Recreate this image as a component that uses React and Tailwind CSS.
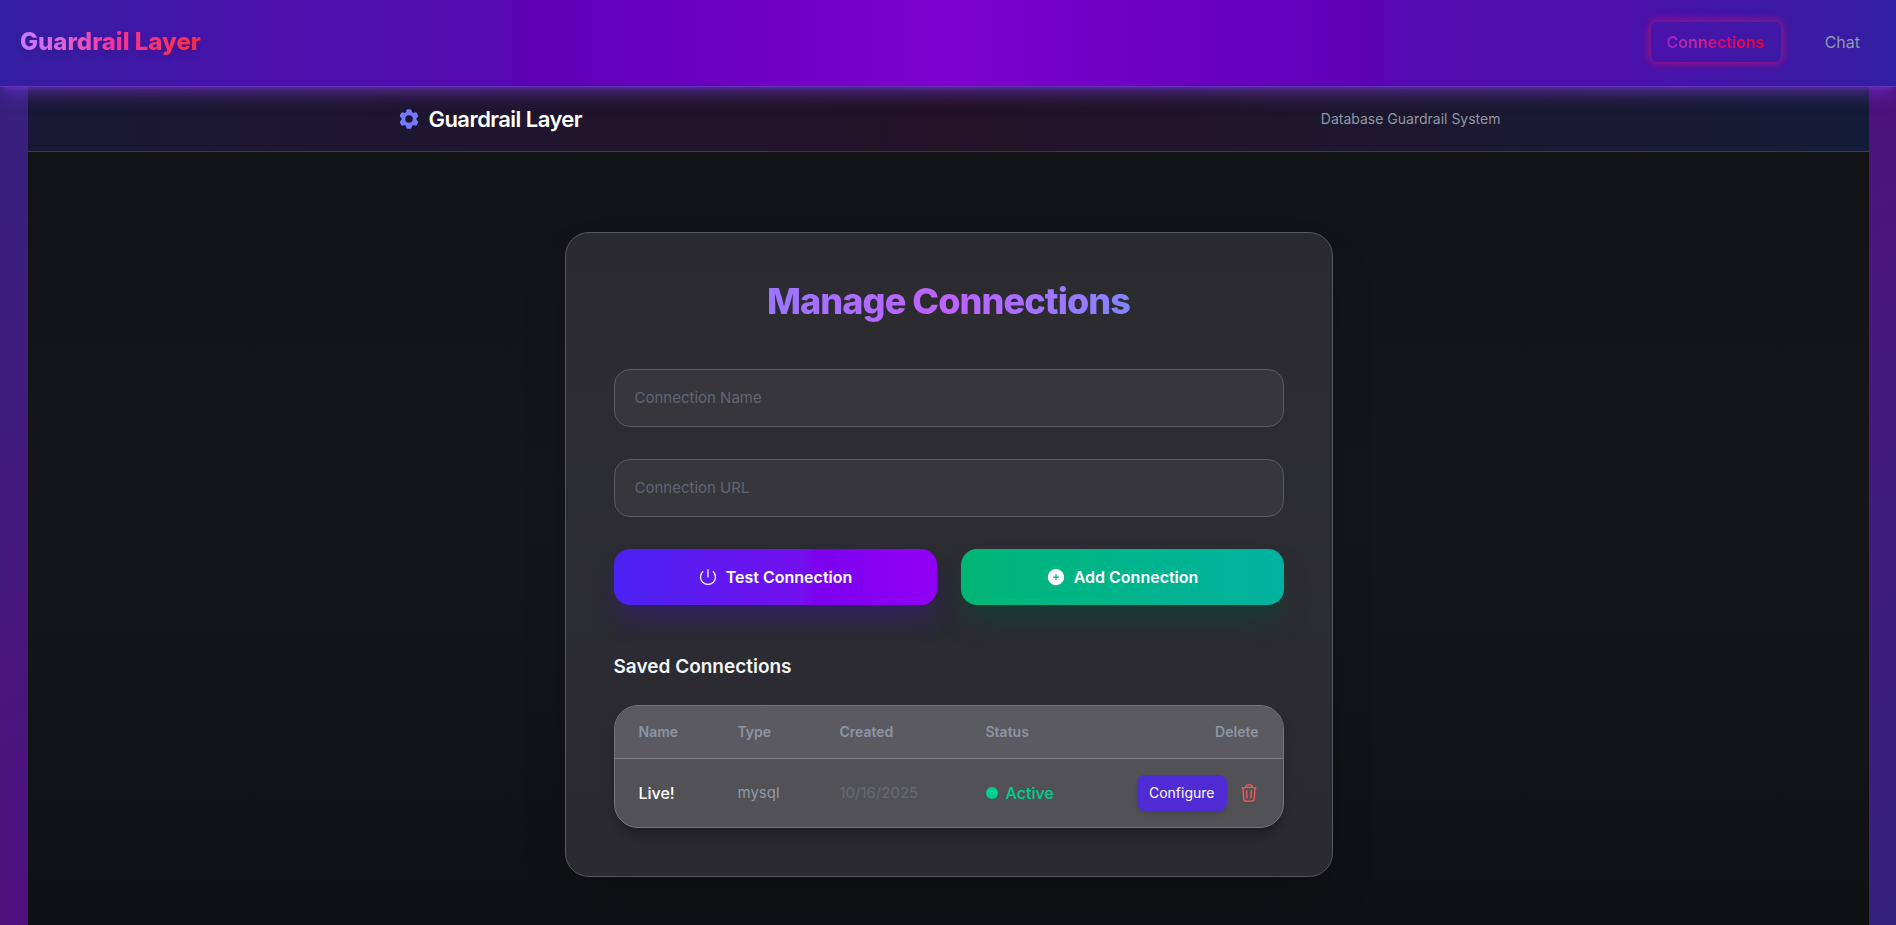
import { HiCog6Tooth, HiOutlinePower, HiOutlineTrash, HiPlusCircle } from "react-icons/hi2";

const connections = [{ name: "Live!", type: "mysql", created: "10/16/2025", status: "Active" }];

function TextField({ label, type = "text" }) {
  return (
    <input
      type={type}
      aria-label={label}
      placeholder={label}
      className="w-full rounded-2xl border border-[#5b5c61] bg-[#36363b] px-5 py-4 text-[15px] leading-6 text-white placeholder:text-[#616673] focus:outline-none"
    />
  );
}

function NavBar() {
  return (
    <nav className="relative z-10 flex items-center justify-between border-b border-[#6434b8] bg-[linear-gradient(90deg,#331fa1_0%,#4b11ac_14%,#550bb2_26%,#5d00b6_28%,#7d00ce_50%,#5d00b6_72%,#550bb2_74%,#4b11ac_86%,#331fa1_100%)] px-5 pt-[22px] pb-6 shadow-lg shadow-[#7c3ae0]/50">
      <span className="bg-linear-to-r from-purple-400 via-pink-500 to-red-500 bg-clip-text text-2xl font-extrabold text-transparent drop-shadow-md">
        Guardrail Layer
      </span>
      <div className="flex items-center gap-7">
        <a href="#connections" className="rounded-md px-4 py-2 font-semibold shadow-[0_0_9px_1px_#d0106ecc]">
          <span className="bg-linear-to-r from-[#a01cc8] via-[#e6006e] to-[#f00028] bg-clip-text text-transparent">
            Connections
          </span>
        </a>
        <a href="#chat" className="px-4 py-2 text-[#9197ae]">Chat</a>
      </div>
    </nav>
  );
}

function ConnectionsTable() {
  return (
    <div className="overflow-hidden rounded-3xl border border-[#76767b] bg-[#525256] shadow-lg shadow-black/25">
      <table className="w-full text-left">
        <thead className="border-b border-[#7d7d82] bg-[#5b5a60] text-sm text-[#8d95a5]">
          <tr>
            <th className="w-[99px] py-4 pl-6 font-semibold">Name</th>
            <th className="w-[102px] py-4 pl-6 font-semibold">Type</th>
            <th className="w-[146px] py-4 pl-6 font-semibold">Created</th>
            <th className="py-4 pl-6 font-semibold">Status</th>
            <th className="px-6 py-4 text-right font-semibold">Delete</th>
          </tr>
        </thead>
        <tbody>
          {connections.map((c) => (
            <tr key={c.name}>
              <td className="py-4 pl-6 font-medium text-white">{c.name}</td>
              <td className="py-4 pl-6 text-[15px] text-[#9198a6]">{c.type}</td>
              <td className="py-4 pl-6 text-[15px] text-[#666b78]">{c.created}</td>
              <td className="py-4 pl-6">
                <span className="flex items-center gap-2 font-medium text-[#00d08c]">
                  <span className="size-3 rounded-full bg-[#00d08c]" />
                  {c.status}
                </span>
              </td>
              <td className="px-6 py-4">
                <div className="flex items-center justify-end gap-3">
                  <button type="button" className="rounded-lg bg-[#4f2bd3] px-3 py-2 text-sm text-white shadow-md">
                    Configure
                  </button>
                  <button type="button" aria-label="Delete connection" className="text-[#fb5b60]">
                    <HiOutlineTrash className="size-5" />
                  </button>
                </div>
              </td>
            </tr>
          ))}
        </tbody>
      </table>
    </div>
  );
}

export default function App() {
  return (
    <div className="flex min-h-screen flex-col bg-linear-to-br from-[#33227f] via-[#4f0f7d] to-[#33227f] font-['Inter',sans-serif]">
      <NavBar />
      <div className="mr-[27px] ml-7 flex flex-1 flex-col bg-linear-to-b from-[#111215] via-[#14161a] to-[#101114]">
        <header className="border-b border-white/15 bg-linear-to-r from-[#1a1835] via-[#231228] to-[#151c38]">
          <div className="mx-auto flex max-w-6xl items-center justify-between px-6 py-4">
            <div className="flex items-center gap-2">
              <HiCog6Tooth className="size-6 text-[#7378ff]" />
              <h1 className="text-[22px] leading-8 font-semibold tracking-tight text-white">Guardrail Layer</h1>
            </div>
            <span className="text-sm text-[#8f97a5]">Database Guardrail System</span>
          </div>
        </header>
        <main className="flex flex-1 items-start justify-center px-6 pt-20 pb-12">
          <section className="w-full max-w-3xl rounded-3xl border border-[#56575b] bg-linear-to-b from-[#2b2b2f] via-[#2c2c33] to-[#2b2a2f] p-12 shadow-2xl">
            <h2 className="mb-11 bg-[linear-gradient(90deg,#7c86ff,#c061ff_50%,#51a2ff)] bg-clip-text pb-1 text-center text-4xl font-extrabold tracking-tight text-transparent">
              Manage Connections
            </h2>
            <form className="flex flex-col gap-8">
              <TextField label="Connection Name" />
              <TextField label="Connection URL" />
              <div className="grid grid-cols-2 gap-6">
                <button
                  type="button"
                  className="flex items-center justify-center gap-2 rounded-2xl bg-[linear-gradient(90deg,#4a22f2_0%,#7310ee_58%,#7c00ee_63%,#9200f5_100%)] py-4 font-semibold text-white shadow-[0_18px_26px_-5px_#3510b060]"
                >
                  <HiOutlinePower className="size-5" />
                  Test Connection
                </button>
                <button
                  type="button"
                  className="flex items-center justify-center gap-2 rounded-2xl bg-linear-to-r from-[#00b675] to-[#00b2a0] py-4 font-semibold text-white shadow-[0_18px_26px_-5px_#00503080]"
                >
                  <HiPlusCircle className="size-5" />
                  Add Connection
                </button>
              </div>
            </form>
            <h3 className="mt-12 mb-6 text-[19px] leading-7 font-semibold text-gray-100">Saved Connections</h3>
            <ConnectionsTable />
          </section>
        </main>
      </div>
    </div>
  );
}
